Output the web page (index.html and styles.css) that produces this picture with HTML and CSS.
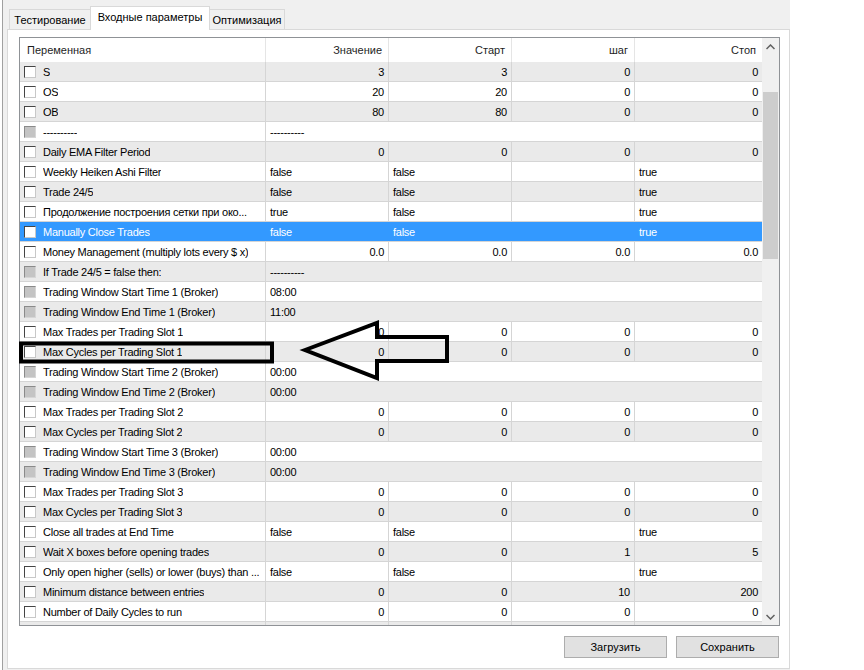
FILE: index.html
```html
<!DOCTYPE html>
<html lang="ru">
<head>
    <meta charset="UTF-8">
    <title>Входные параметры</title>
    <link rel="stylesheet" href="styles.css">
</head>
<body>

<div class="window">

    <div class="tabs">
        <div class="tab tab-test">Тестирование</div>
        <div class="tab tab-input active">Входные параметры</div>
        <div class="tab tab-opt">Оптимизация</div>
    </div>

    <div class="page">

        <div class="list">
            <div class="grid">
                <div class="head">
                    <div class="first">Переменная</div>
                    <div>Значение</div>
                    <div>Старт</div>
                    <div>шаг</div>
                    <div class="last">Стоп</div>
                </div>

                <div class="row alt">
                    <div class="cell name"><span class="cb"></span><span class="label">S</span></div>
                    <div class="cell num">3</div><div class="cell num">3</div><div class="cell num">0</div><div class="cell num">0</div>
                </div>
                <div class="row">
                    <div class="cell name"><span class="cb"></span><span class="label">OS</span></div>
                    <div class="cell num">20</div><div class="cell num">20</div><div class="cell num">0</div><div class="cell num">0</div>
                </div>
                <div class="row alt">
                    <div class="cell name"><span class="cb"></span><span class="label">OB</span></div>
                    <div class="cell num">80</div><div class="cell num">80</div><div class="cell num">0</div><div class="cell num">0</div>
                </div>
                <div class="row">
                    <div class="cell name"><span class="cb off"></span><span class="label">----------</span></div>
                    <div class="cell span">----------</div>
                </div>
                <div class="row alt">
                    <div class="cell name"><span class="cb"></span><span class="label">Daily EMA Filter Period</span></div>
                    <div class="cell num">0</div><div class="cell num">0</div><div class="cell num">0</div><div class="cell num">0</div>
                </div>
                <div class="row">
                    <div class="cell name"><span class="cb"></span><span class="label">Weekly Heiken Ashi Filter</span></div>
                    <div class="cell">false</div><div class="cell">false</div><div class="cell"></div><div class="cell">true</div>
                </div>
                <div class="row alt">
                    <div class="cell name"><span class="cb"></span><span class="label">Trade 24/5</span></div>
                    <div class="cell">false</div><div class="cell">false</div><div class="cell"></div><div class="cell">true</div>
                </div>
                <div class="row">
                    <div class="cell name"><span class="cb"></span><span class="label">Продолжение построения сетки при око...</span></div>
                    <div class="cell">true</div><div class="cell">false</div><div class="cell"></div><div class="cell">true</div>
                </div>
                <div class="row sel">
                    <div class="cell name"><span class="cb"></span><span class="label">Manually Close Trades</span></div>
                    <div class="cell">false</div><div class="cell">false</div><div class="cell"></div><div class="cell">true</div>
                </div>
                <div class="row">
                    <div class="cell name"><span class="cb"></span><span class="label">Money Management (multiply lots every $ x)</span></div>
                    <div class="cell num">0.0</div><div class="cell num">0.0</div><div class="cell num">0.0</div><div class="cell num">0.0</div>
                </div>
                <div class="row alt">
                    <div class="cell name"><span class="cb off"></span><span class="label">If Trade 24/5 = false then:</span></div>
                    <div class="cell span">----------</div>
                </div>
                <div class="row">
                    <div class="cell name"><span class="cb off"></span><span class="label">Trading Window Start Time 1 (Broker)</span></div>
                    <div class="cell span">08:00</div>
                </div>
                <div class="row alt">
                    <div class="cell name"><span class="cb off"></span><span class="label">Trading Window End Time 1 (Broker)</span></div>
                    <div class="cell span">11:00</div>
                </div>
                <div class="row">
                    <div class="cell name"><span class="cb"></span><span class="label">Max Trades per Trading Slot 1</span></div>
                    <div class="cell num">0</div><div class="cell num">0</div><div class="cell num">0</div><div class="cell num">0</div>
                </div>
                <div class="row alt">
                    <div class="cell name"><span class="cb"></span><span class="label">Max Cycles per Trading Slot 1</span></div>
                    <div class="cell num">0</div><div class="cell num">0</div><div class="cell num">0</div><div class="cell num">0</div>
                </div>
                <div class="row">
                    <div class="cell name"><span class="cb off"></span><span class="label">Trading Window Start Time 2 (Broker)</span></div>
                    <div class="cell span">00:00</div>
                </div>
                <div class="row alt">
                    <div class="cell name"><span class="cb off"></span><span class="label">Trading Window End Time 2 (Broker)</span></div>
                    <div class="cell span">00:00</div>
                </div>
                <div class="row">
                    <div class="cell name"><span class="cb"></span><span class="label">Max Trades per Trading Slot 2</span></div>
                    <div class="cell num">0</div><div class="cell num">0</div><div class="cell num">0</div><div class="cell num">0</div>
                </div>
                <div class="row alt">
                    <div class="cell name"><span class="cb"></span><span class="label">Max Cycles per Trading Slot 2</span></div>
                    <div class="cell num">0</div><div class="cell num">0</div><div class="cell num">0</div><div class="cell num">0</div>
                </div>
                <div class="row">
                    <div class="cell name"><span class="cb off"></span><span class="label">Trading Window Start Time 3 (Broker)</span></div>
                    <div class="cell span">00:00</div>
                </div>
                <div class="row alt">
                    <div class="cell name"><span class="cb off"></span><span class="label">Trading Window End Time 3 (Broker)</span></div>
                    <div class="cell span">00:00</div>
                </div>
                <div class="row">
                    <div class="cell name"><span class="cb"></span><span class="label">Max Trades per Trading Slot 3</span></div>
                    <div class="cell num">0</div><div class="cell num">0</div><div class="cell num">0</div><div class="cell num">0</div>
                </div>
                <div class="row alt">
                    <div class="cell name"><span class="cb"></span><span class="label">Max Cycles per Trading Slot 3</span></div>
                    <div class="cell num">0</div><div class="cell num">0</div><div class="cell num">0</div><div class="cell num">0</div>
                </div>
                <div class="row">
                    <div class="cell name"><span class="cb"></span><span class="label">Close all trades at End Time</span></div>
                    <div class="cell">false</div><div class="cell">false</div><div class="cell"></div><div class="cell">true</div>
                </div>
                <div class="row alt">
                    <div class="cell name"><span class="cb"></span><span class="label">Wait X boxes before opening trades</span></div>
                    <div class="cell num">0</div><div class="cell num">0</div><div class="cell num">1</div><div class="cell num">5</div>
                </div>
                <div class="row">
                    <div class="cell name"><span class="cb"></span><span class="label">Only open higher (sells) or lower (buys) than ...</span></div>
                    <div class="cell">false</div><div class="cell">false</div><div class="cell"></div><div class="cell">true</div>
                </div>
                <div class="row alt">
                    <div class="cell name"><span class="cb"></span><span class="label">Minimum distance between entries</span></div>
                    <div class="cell num">0</div><div class="cell num">0</div><div class="cell num">10</div><div class="cell num">200</div>
                </div>
                <div class="row">
                    <div class="cell name"><span class="cb"></span><span class="label">Number of Daily Cycles to run</span></div>
                    <div class="cell num">0</div><div class="cell num">0</div><div class="cell num">0</div><div class="cell num">0</div>
                </div>
                <div class="row alt">
                    <div class="cell"></div><div class="cell"></div><div class="cell"></div><div class="cell"></div><div class="cell"></div>
                </div>
            </div>

            <!-- scrollbar -->
            <div class="scroll">
                <div class="arrow">
                    <svg width="9" height="6" viewBox="0 0 9 6"><polyline points="0.5,5 4.5,1 8.5,5" fill="none" stroke="#606060" stroke-width="1.5"/></svg>
                </div>
                <div class="track"><div class="thumb"></div></div>
                <div class="arrow">
                    <svg width="9" height="6" viewBox="0 0 9 6"><polyline points="0.5,1 4.5,5 8.5,1" fill="none" stroke="#606060" stroke-width="1.5"/></svg>
                </div>
            </div>
        </div>

        <div class="buttons">
            <div class="button">Загрузить</div>
            <div class="button">Сохранить</div>
        </div>

        <!-- annotation drawn over the list -->
        <svg class="markup" width="781" height="638" viewBox="8 30 781 638">
            <rect x="21" y="343.5" width="251" height="18" fill="none" stroke="#000" stroke-width="4"/>
            <polygon points="305,350 377,323 377,337 447,337 447,361 377,361 377,378" fill="none" stroke="#000" stroke-width="4"/>
        </svg>
    </div>

</div>

</body>
</html>
```

FILE: styles.css
```css
body {
    margin: 0;
    background-color: #ffffff;
    font-family: "Liberation Sans", Arial, sans-serif;
    font-size: 11px;
    color: #000;
}
.window {
    margin-left: 2px;
    width: 788px;
    height: 670px;
    box-sizing: border-box;
    border-left: 1px solid #a0a0a0;
    padding-left: 4px;
    background-color: #f0f0f0;
}
.tabs {
    display: flex;
    align-items: flex-end;
    height: 29px;
    padding-left: 2px;
}
.tab {
    height: 20px;
    box-sizing: border-box;
    border: 1px solid #d9d9d9;
    border-bottom: 0;
    background-color: #f0f0f0;
    display: flex;
    align-items: center;
    justify-content: center;
}
.tab-test { width: 82px; }
.tab-input { width: 120px; }
.tab-opt { width: 76px; margin-left: -1px; }
.tab.active {
    height: 24px;
    margin-bottom: -1px;
    margin-left: -1px;
    align-items: flex-start;
    padding-top: 4px;
    background-color: #fff;
    position: relative;
    z-index: 1;
}
.page {
    position: relative;
    width: 783px;
    height: 640px;
    box-sizing: border-box;
    border: 1px solid #d9d9d9;
    background-color: #fff;
    padding: 7px 0 0 11px;
}
.list {
    width: 761px;
    height: 589px;
    box-sizing: border-box;
    border: 1px solid #8f9296;
    display: flex;
}
.grid {
    width: 742px;
    overflow: hidden;
}
.head, .row {
    display: grid;
    grid-template-columns: 246px 123px 123px 123px 127px;
}
.head {
    height: 24px;
}
.head div {
    border-right: 1px solid #e5e5e5;
    padding: 0 6px;
    display: flex;
    align-items: center;
    justify-content: flex-end;
    color: #1e1e1e;
}
.head .first {
    justify-content: flex-start;
    padding-left: 7px;
}
.head .last {
    border-right: 0;
}
.row {
    height: 20px;
    box-sizing: border-box;
    border-bottom: 1px solid #d5d5d5;
    letter-spacing: -0.25px;
}
.row.alt {
    background-color: #eaeaea;
}
.row.sel {
    background-color: #3399ff;
    color: #fff;
}
.cell {
    border-right: 1px solid #d5d5d5;
    padding: 0 4px;
    display: flex;
    align-items: center;
    white-space: nowrap;
    overflow: hidden;
}
.cell:last-child {
    border-right: 0;
}
.cell.num {
    justify-content: flex-end;
}
.cell.span {
    grid-column: 2 / 6;
    border-right: 0;
}
.row.sel .cell {
    border-right-color: transparent;
}
.cb {
    flex: none;
    width: 12px;
    height: 12px;
    box-sizing: border-box;
    margin-right: 7px;
    border: 1px solid;
    border-color: #444 #c8c8c8 #c8c8c8 #444;
    background-color: #fff;
}
.cb.off {
    background-color: #c4c4c4;
    border-color: #8a8a8a #d6d6d6 #d6d6d6 #8a8a8a;
}
.label {
    overflow: hidden;
    text-overflow: ellipsis;
}
.scroll {
    width: 17px;
    background-color: #f0f0f0;
    display: flex;
    flex-direction: column;
}
.arrow {
    height: 17px;
    display: flex;
    align-items: center;
    justify-content: center;
}
.track {
    flex: 1;
    padding: 0 1px;
}
.thumb {
    margin-top: 37px;
    height: 167px;
    background-color: #cdcdcd;
}
.buttons {
    width: 760px;
    margin-top: 10px;
    display: flex;
    justify-content: flex-end;
    gap: 9px;
}
.button {
    width: 103px;
    height: 22px;
    box-sizing: border-box;
    border: 1px solid #adadad;
    background-color: #e1e1e1;
    display: flex;
    align-items: center;
    justify-content: center;
}
.markup {
    position: absolute;
    left: 0;
    top: 0;
    pointer-events: none;
}
```
